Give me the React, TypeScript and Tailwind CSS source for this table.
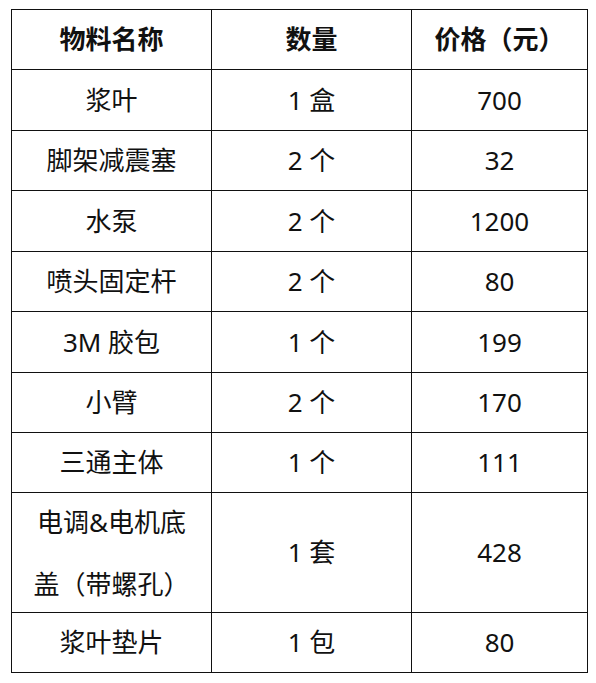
import React from "react";

const rows: [React.ReactNode, string, string][] = [
  ["浆叶", "1 盒", "700"],
  ["脚架减震塞", "2 个", "32"],
  ["水泵", "2 个", "1200"],
  ["喷头固定杆", "2 个", "80"],
  ["3M 胶包", "1 个", "199"],
  ["小臂", "2 个", "170"],
  ["三通主体", "1 个", "111"],
  [
    <span className="block leading-[62px]">
      电调&amp;电机底
      <br />
      盖（带螺孔）
    </span>,
    "1 套",
    "428",
  ],
  ["浆叶垫片", "1 包", "80"],
];

export default function App() {
  return (
    <div
      className="w-[596px] h-[683px] bg-white pt-[9px] pl-[11px] text-[#111]"
      style={{ fontFamily: '"Noto Sans", "Noto Sans CJK SC", sans-serif' }}
    >
      <div className="grid w-[577px] grid-cols-[199px_199px_175px] grid-rows-[59px_60px_59px_60px_59px_60px_59px_59px_119px_59px] gap-px bg-[#111] p-px text-[26px]">
        <div className="flex items-center justify-center bg-white font-bold">物料名称</div>
        <div className="flex items-center justify-center bg-white font-bold">数量</div>
        <div className="flex items-center justify-center bg-white font-bold">价格（元）</div>
        {rows.map((r, i) => (
          <React.Fragment key={i}>
            <div className="flex items-center justify-center bg-white text-center">{r[0]}</div>
            <div className="flex items-center justify-center bg-white">{r[1]}</div>
            <div className="flex items-center justify-center bg-white">{r[2]}</div>
          </React.Fragment>
        ))}
      </div>
    </div>
  );
}
